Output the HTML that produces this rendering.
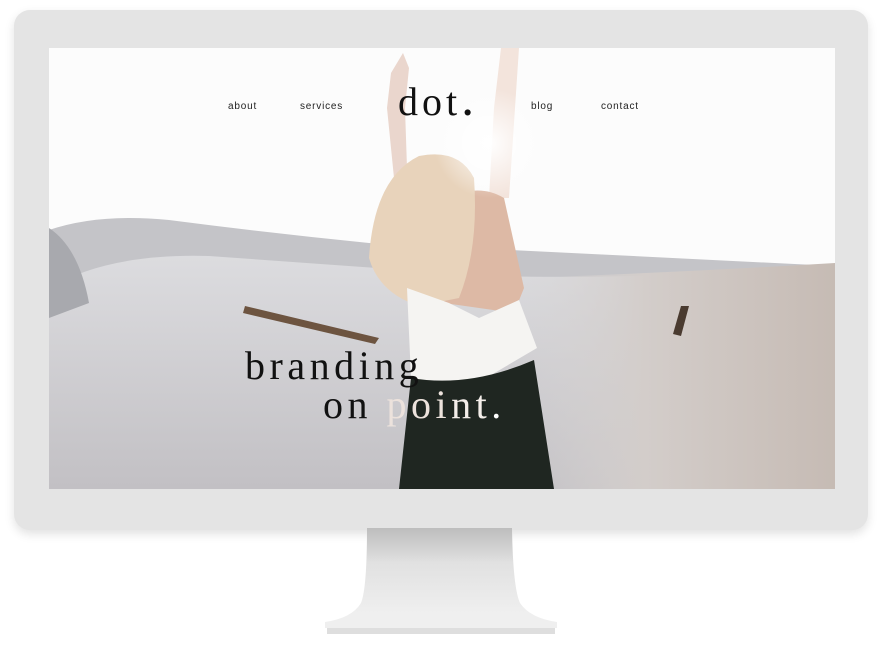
<!DOCTYPE html>
<html><head><meta charset="utf-8"><style>
html,body{margin:0;padding:0;background:#fff;}
body{width:884px;height:646px;position:relative;overflow:hidden;font-family:"Liberation Sans",sans-serif;}
.frame{position:absolute;left:14px;top:10px;width:854px;height:520px;background:#e4e4e4;border-radius:16px;box-shadow:0 4px 10px rgba(0,0,0,.12);}
.screen{position:absolute;left:49px;top:48px;width:786px;height:441px;overflow:hidden;}
.stand{position:absolute;left:325px;top:528px;width:232px;height:110px;}
.nav{position:absolute;top:101px;font-size:10px;color:#222;letter-spacing:.8px;}
.logo{position:absolute;left:398px;top:78px;font-family:"Liberation Serif",serif;font-size:40px;color:#111;letter-spacing:4px;}
.tag{position:absolute;font-family:"Liberation Serif",serif;font-size:40px;color:#111;letter-spacing:4.5px;}
</style></head><body>
<div class="frame"></div>
<div class="screen">
 <svg width="786" height="441" style="position:absolute;left:0;top:0">
  <defs>
   <linearGradient id="sand" x1="0" y1="0" x2="0" y2="1"><stop offset="0" stop-color="#dcdcdf"/><stop offset="1" stop-color="#c2c0c4"/></linearGradient>
   <linearGradient id="sandr" x1="0" y1="0" x2="1" y2="0"><stop offset="0" stop-color="#d8d6d6" stop-opacity="0"/><stop offset=".4" stop-color="#d3cdca"/><stop offset="1" stop-color="#c6bbb4"/></linearGradient>
   <radialGradient id="sun" cx="0.5" cy="0.5" r="0.5"><stop offset="0" stop-color="#fff"/><stop offset="1" stop-color="#fff" stop-opacity="0"/></radialGradient>
  </defs>
  <rect width="786" height="441" fill="#fcfcfc"/>
  <path d="M0 182 Q50 165 120 172 Q220 185 320 195 L786 218 L786 441 L0 441Z" fill="#c4c4c8"/>
  <path d="M0 240 Q60 205 160 208 Q300 218 440 228 Q600 232 786 218 L786 441 L0 441Z" fill="url(#sand)"/>
  <path d="M470 230 Q620 225 786 215 L786 441 L480 441Z" fill="url(#sandr)"/>
  <path d="M0 180 Q30 200 40 255 L0 270Z" fill="#a8a9ae"/>
  <path d="M196 258 L330 290 L326 296 L194 265Z" fill="#6d5440"/>
  <path d="M632 258 L640 258 L632 288 L624 286Z" fill="#4a3b30"/>
  <path d="M342 25 L354 5 L360 20 L356 60 L358 120 L345 130 L338 60Z" fill="#ead6cd"/>
  <path d="M452 0 L470 0 L466 60 L460 150 L440 150 L445 60Z" fill="#f3e4dc"/>
  <path d="M400 150 Q430 135 455 150 L475 240 L465 265 L395 255Z" fill="#ddb9a5"/>
  <path d="M320 210 Q325 130 370 108 Q410 100 425 130 Q430 200 410 250 L370 258 Q330 245 320 210Z" fill="#e8d3bb"/>
  <path d="M358 240 L400 255 L430 270 L470 252 L488 300 L420 340 L362 330Z" fill="#f5f4f2"/>
  <path d="M362 330 Q420 340 485 312 L505 441 L350 441Z" fill="#1f2621"/>
  <circle cx="440" cy="95" r="55" fill="url(#sun)"/>
 </svg>
</div>
<div class="nav" style="left:228px">about</div>
<div class="nav" style="left:300px">services</div>
<div class="nav" style="left:531px">blog</div>
<div class="nav" style="left:601px">contact</div>
<div class="logo">dot<span style="font-size:52px;line-height:0">.</span></div>
<div class="tag" style="left:245px;top:342px">branding</div>
<div class="tag" style="left:323px;top:381px">on <span style="color:#ece2dc">poi</span><span style="color:#f4eeea">nt</span><span style="color:#fff">.</span></div>
<svg class="stand" viewBox="0 0 232 110">
 <defs><linearGradient id="st" x1="0" y1="0" x2="0" y2="1"><stop offset="0" stop-color="#bdbdbd"/><stop offset=".35" stop-color="#e1e1e1"/><stop offset=".85" stop-color="#efefef"/></linearGradient></defs>
 <path d="M42 0 L187 0 Q188 60 195 75 Q205 90 232 94 L232 100 L0 100 L0 94 Q27 90 36 75 Q42 60 42 0Z" fill="url(#st)"/>
 <rect x="2" y="100" width="228" height="6" fill="#dedede"/>
</svg>
</body></html>
